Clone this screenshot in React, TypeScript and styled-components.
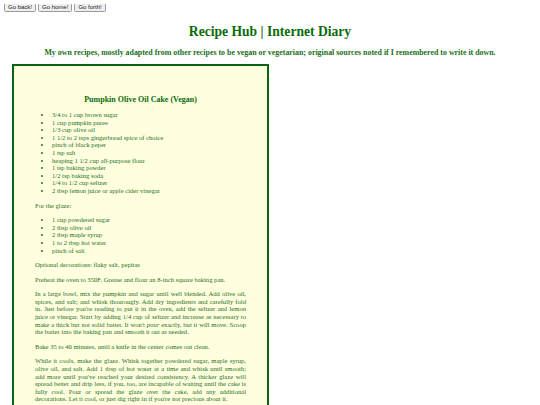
import React from 'react';
import styled, { createGlobalStyle } from 'styled-components';

const GlobalStyle = createGlobalStyle`
  body {
    margin: 4px;
    background: #ffffff;
    font-family: 'Liberation Serif', 'Times New Roman', serif;
  }
`;

const NavBar = styled.div`
  display: flex;
  gap: 2px;
  margin-top: -1px;
`;

const NavButton = styled.button`
  font-family: 'Liberation Sans', Arial, sans-serif;
  font-size: 6px;
  line-height: 7px;
  height: 9px;
  padding: 0 3px;
  color: #222;
  background: #efefef;
  border: 1px solid #999;
  border-radius: 1.5px;
`;

const Title = styled.h1`
  margin: 12px 0 0;
  text-align: center;
  font-size: 13.6px;
  line-height: 16px;
  font-weight: bold;
  color: #0b6b0b;
`;

const Subtitle = styled.h4`
  margin: 8px 0 0;
  text-align: center;
  font-size: 7.9px;
  line-height: 9px;
  font-weight: bold;
  color: #1c6f1c;
`;

const RecipeCard = styled.div`
  margin: 7px 0 0 8px;
  width: 257px;
  box-sizing: border-box;
  border: 2px solid #0a6410;
  background: #ffffe0;
  padding: 29px 21px 20px;
  color: #237020;
  font-size: 6.6px;
  line-height: 7.6px;
`;

const RecipeTitle = styled.h3`
  margin: 0 0 6px;
  text-align: center;
  font-size: 8px;
  line-height: 9px;
  font-weight: bold;
  color: #0b6b0b;
`;

const List = styled.ul`
  margin: 7px 0;
  padding-left: 17px;
  list-style: disc;
`;

const Para = styled.p`
  margin: 7px 0;
  text-align: justify;
`;

const ingredients = [
  '3/4 to 1 cup brown sugar',
  '1 cup pumpkin puree',
  '1/3 cup olive oil',
  '1 1/2 to 2 tsps gingerbread spice of choice',
  'pinch of black peper',
  '1 tsp salt',
  'heaping 1 1/2 cup all-purpose flour',
  '1 tsp baking powder',
  '1/2 tsp baking soda',
  '1/4 to 1/2 cup seltzer',
  '2 tbsp lemon juice or apple cider vinegar',
];

const glaze = [
  '1 cup powdered sugar',
  '2 tbsp olive oil',
  '2 tbsp maple syrup',
  '1 to 2 tbsp hot water',
  'pinch of salt',
];

export default function App() {
  return (
    <>
      <GlobalStyle />
      <NavBar>
        <NavButton>Go back!</NavButton>
        <NavButton>Go home!</NavButton>
        <NavButton>Go forth!</NavButton>
      </NavBar>
      <Title>Recipe Hub | Internet Diary</Title>
      <Subtitle>
        My own recipes, mostly adapted from other recipes to be vegan or vegetarian; original sources noted if I
        remembered to write it down.
      </Subtitle>
      <RecipeCard>
        <RecipeTitle>Pumpkin Olive Oil Cake (Vegan)</RecipeTitle>
        <List>
          {ingredients.map((item) => (
            <li key={item}>{item}</li>
          ))}
        </List>
        <Para>For the glaze:</Para>
        <List>
          {glaze.map((item) => (
            <li key={item}>{item}</li>
          ))}
        </List>
        <Para>Optional decorations: flaky salt, pepitas</Para>
        <Para>Preheat the oven to 350F. Grease and flour an 8-inch square baking pan.</Para>
        <Para>
          In a large bowl, mix the pumpkin and sugar until well blended. Add olive oil, spices, and salt; and whisk
          thourougly. Add dry ingredients and carefully fold in. Just before you're reading to put it in the oven, add
          the seltzer and lemon juice or vinegar. Start by adding 1/4 cup of seltzer and increase as necessary to make
          a thick but not solid batter. It won't <em>pour</em> exactly, but it will move. Scoop the batter into the
          baking pan and smooth it out as needed.
        </Para>
        <Para>Bake 35 to 40 minutes, until a knife in the center comes out clean.</Para>
        <Para>
          While it cools, make the glaze. Whisk together powdered sugar, maple syrup, olive oil, and salt. Add 1 tbsp
          of hot water at a time and whisk until smooth; add more until you've reached your desired consistency. A
          thicker glaze will spread better and drip less, if you, too, are incapable of waiting until the cake is
          fully cool. Pour or spread the glaze over the cake, add any additional decorations. Let it cool, or just dig
          right in if you're not precious about it.
        </Para>
      </RecipeCard>
    </>
  );
}
